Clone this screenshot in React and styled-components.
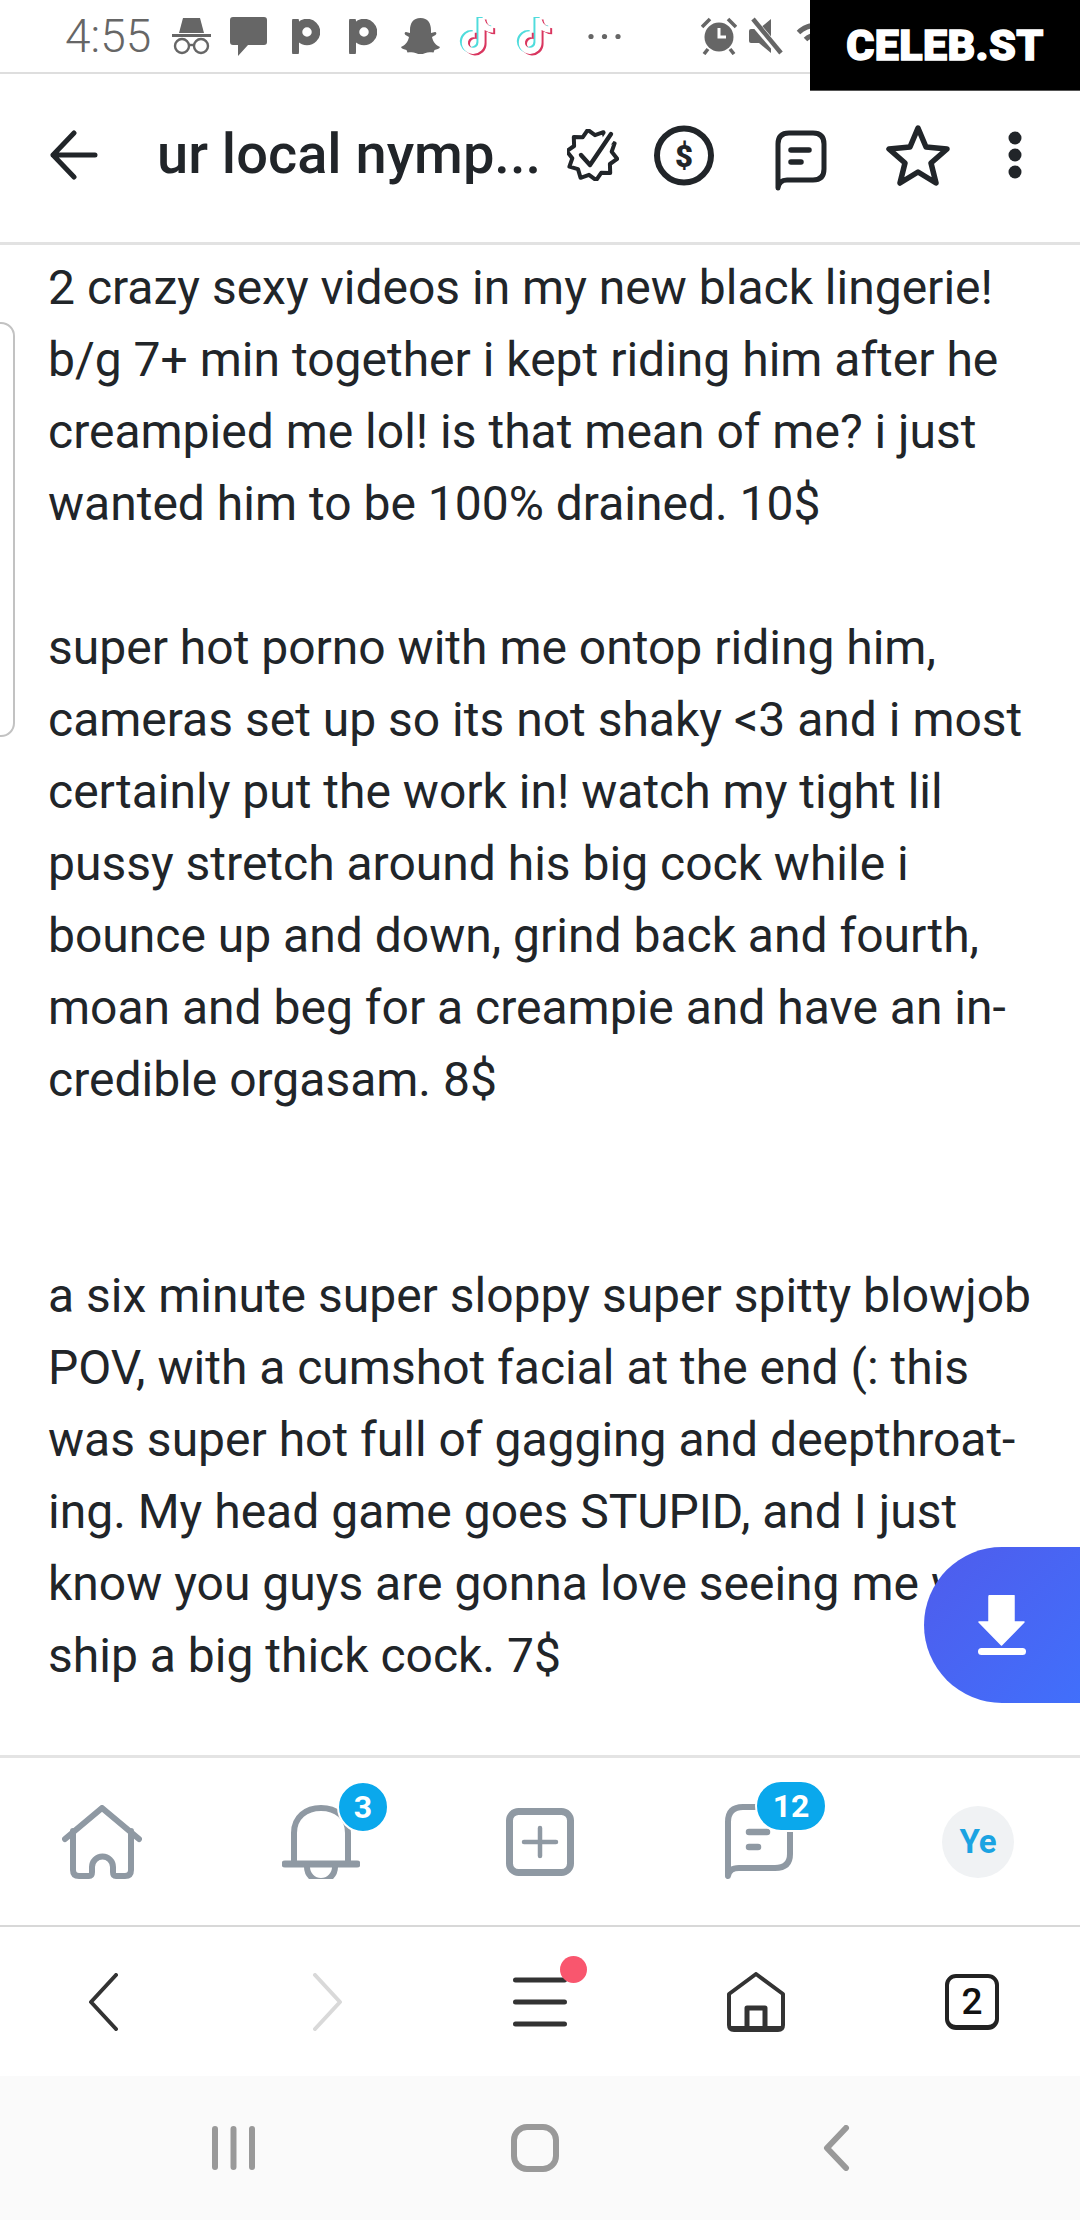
import React from "react";
import styled, { createGlobalStyle } from "styled-components";
import { MdWifi } from "react-icons/md";

const Global = createGlobalStyle`
  html, body { margin: 0; padding: 0; background: #fff; }
  * { box-sizing: border-box; }
`;

const Page = styled.div`
  position: relative;
  width: 1080px;
  height: 2220px;
  overflow: hidden;
  display: flex;
  flex-direction: column;
  background: #fff;
  font-family: Roboto, "Liberation Sans", sans-serif;
  color: #212529;
`;

const StatusBar = styled.div`
  flex: 0 0 74px;
  display: flex;
  align-items: center;
  padding-left: 65px;
  border-bottom: 2px solid #dedede;
  color: #666;
`;
const Time = styled.span`
  font-size: 46px;
  font-weight: 300;
  width: 85px;
  line-height: 1;
`;
const StatusIcon = styled.span`
  display: inline-flex;
  flex: none;
  margin-left: ${(p) => p.$ml}px;
`;
const Brand = styled.div`
  position: absolute;
  top: 0;
  right: 0;
  width: 270px;
  height: 91px;
  background: #000;
  border-bottom: 1px solid #555;
  color: #fff;
  font-family: Roboto, sans-serif;
  font-weight: 900;
  font-size: 43px;
  letter-spacing: 0.4px;
  -webkit-text-stroke: 1.4px #fff;
  display: flex;
  align-items: center;
  justify-content: center;
`;

const Header = styled.header`
  flex: 0 0 171px;
  display: flex;
  align-items: center;
  padding: 0 0 6px 50px;
  border-bottom: 3px solid #e2e2e2;
  color: #212529;
`;
const Title = styled.h1`
  margin: 0 0 0 59px;
  width: 390px;
  flex: none;
  font-size: 56px;
  font-weight: 500;
  line-height: 1.2;
  white-space: nowrap;
`;
const HeaderIcon = styled.span`
  display: inline-flex;
  flex: none;
  margin-left: ${(p) => p.$ml}px;
  margin-top: ${(p) => p.$mt || 0}px;
`;

const Content = styled.main`
  flex: 1;
  overflow: hidden;
  padding: 7px 0 0 48px;
  font-size: 48px;
  line-height: 72px;
  color: #212529;
`;
const Line = styled.div`
  height: 72px;
  white-space: nowrap;
`;
const SideCard = styled.div`
  position: absolute;
  left: -20px;
  top: 322px;
  width: 35px;
  height: 415px;
  border: 2px solid #c2c2c2;
  border-radius: 14px;
`;
const Fab = styled.button`
  position: absolute;
  top: 1547px;
  right: 0;
  width: 156px;
  height: 156px;
  padding: 0;
  border: 0;
  border-radius: 78px 0 0 78px;
  background: linear-gradient(135deg, #4f5cec, #416ffb);
  display: flex;
  align-items: center;
  justify-content: center;
`;

const AppNav = styled.nav`
  flex: 0 0 172px;
  display: grid;
  grid-template-columns: repeat(5, 219px);
  margin-left: -7.5px;
  width: 1095px;
  align-items: center;
  justify-items: center;
  border-top: 3px solid #e4e4e4;
  border-bottom: 2px solid #d8d8d8;
  color: #8f99a3;
`;
const NavItem = styled.div`
  position: relative;
  display: flex;
  align-items: center;
  justify-content: center;
`;
const CountBadge = styled.span`
  position: absolute;
  top: -24px;
  left: ${(p) => p.$left}px;
  min-width: ${(p) => p.$w}px;
  height: 52px;
  border: 2px solid #fff;
  border-radius: 26px;
  background: #0aa8ec;
  color: #fff;
  font-size: 32px;
  font-weight: 700;
  display: flex;
  align-items: center;
  justify-content: center;
`;
const Avatar = styled.div`
  width: 72px;
  height: 72px;
  border-radius: 50%;
  background: #f0f2f4;
  color: #1ba3e2;
  font-size: 33px;
  font-weight: 700;
  display: flex;
  align-items: center;
  justify-content: center;
`;

const BrowserBar = styled.div`
  flex: 0 0 149px;
  display: grid;
  grid-template-columns: repeat(5, 216px);
  align-items: center;
  justify-items: center;
  color: #333;
`;
const TabCount = styled.div`
  width: 54px;
  height: 56px;
  border: 4px solid #222;
  border-bottom-width: 5px;
  border-radius: 11px;
  color: #111;
  font-size: 37px;
  font-weight: 500;
  display: flex;
  align-items: center;
  justify-content: center;
`;
const MenuWrap = styled.div`
  position: relative;
  display: flex;
`;
const RedDot = styled.span`
  position: absolute;
  left: 47px;
  top: -21px;
  width: 27px;
  height: 27px;
  border-radius: 50%;
  background: #f9566e;
`;
const SystemBar = styled.div`
  flex: 0 0 144px;
  display: grid;
  grid-template-columns: repeat(3, 302px);
  justify-content: center;
  align-items: center;
  justify-items: center;
  padding-right: 10px;
  background: #fafafa;
  color: #999;
`;

const NOTE =
  "M448,209.91a210.06,210.06,0,0,1-122.77-39.25V349.38A162.55,162.55,0,1,1,185,188.31V278.2a74.62,74.62,0,1,0,52.23,71.18V0l88,0a121.18,121.18,0,0,0,1.86,22.17h0A122.18,122.18,0,0,0,381,102.39a121.43,121.43,0,0,0,67,20.14Z";

const burst = (() => {
  const pts = [];
  for (let i = 0; i < 20; i++) {
    const r = i % 2 ? 20 : 25.5;
    const a = (i / 20) * Math.PI * 2 + 0.15;
    pts.push(`${(25 + r * Math.cos(a)).toFixed(1)},${(26 + r * Math.sin(a)).toFixed(1)}`);
  }
  return pts.join(" ");
})();

const Incognito = () => (
  <svg width="39" height="37" viewBox="0 0 39 37" fill="currentColor">
    <path d="M11 0 H28 L32 15 H7 Z" />
    <rect x="0" y="16" width="39" height="3" />
    <g fill="none" stroke="currentColor" strokeWidth="2.4">
      <circle cx="10" cy="28" r="7" />
      <circle cx="29" cy="28" r="7" />
      <path d="M17 27 H22" />
    </g>
  </svg>
);
const Bubble = () => (
  <svg width="37" height="39" viewBox="0 0 37 39" fill="currentColor">
    <path d="M3 0 H34 Q37 0 37 3 V25 Q37 28 34 28 H18 L8 39 V28 H3 Q0 28 0 25 V3 Q0 0 3 0 Z" />
  </svg>
);
const PLogo = () => (
  <svg width="28" height="35" viewBox="0 0 28 35" fill="none" stroke="currentColor">
    <circle cx="15" cy="13" r="9" strokeWidth="8.5" />
    <path d="M3.5 2 V33" strokeWidth="7" strokeLinecap="round" />
  </svg>
);
const Ghost = () => (
  <svg width="39" height="36" viewBox="0 0 39 36" fill="currentColor">
    <path d="M19.5 0 C27 0 30 5.5 30 12 V15 L34 14 C35.5 14 36 16 34.5 17 L31 19 C32 24 35 27.5 39 29 C38.5 31 35.5 31.5 33.5 32 L32.5 34.5 C29 34 26.5 34 24.5 35 C22.5 36 21 36 19.5 36 C18 36 16.5 36 14.5 35 C12.5 34 10 34 6.5 34.5 L5.5 32 C3.5 31.5 0.5 31 0 29 C4 27.5 7 24 8 19 L4.5 17 C3 16 3.5 14 5 14 L9 15 V12 C9 5.5 12 0 19.5 0 Z" />
  </svg>
);
const TikTok = () => (
  <svg width="37" height="42" viewBox="-40 -30 528 572">
    <path d={NOTE} fill="#4fdcdc" transform="translate(-28,-16)" />
    <path d={NOTE} fill="#d9365f" transform="translate(28,22)" />
    <path d={NOTE} fill="#fff" />
  </svg>
);
const Alarm = () => (
  <svg width="36" height="38" viewBox="0 0 36 38" fill="currentColor">
    <circle cx="18" cy="20" r="14.5" />
    <path d="M18 11 V20 H25" fill="none" stroke="#fff" strokeWidth="3" />
    <path d="M1 10 L9 2 M35 10 L27 2 M7 32 L3 37 M29 32 L33 37" stroke="currentColor" strokeWidth="3.6" />
  </svg>
);
const Muted = () => (
  <svg width="37" height="38" viewBox="0 0 37 38" fill="currentColor">
    <path d="M4 12 H12 L24 2 V36 L12 26 H4 Q2 26 2 24 V14 Q2 12 4 12 Z" />
    <path d="M4 2 L33 36" stroke="#fff" strokeWidth="8" />
    <path d="M6 2 L34 36" stroke="currentColor" strokeWidth="4.5" />
  </svg>
);

const BackArrow = () => (
  <svg width="48" height="50" viewBox="0 0 48 50" fill="none" stroke="currentColor" strokeWidth="5" strokeLinecap="round" strokeLinejoin="round">
    <path d="M24 3 L3 25 L24 47 M3 25 H45" />
  </svg>
);
const Verified = () => (
  <svg width="52" height="52" viewBox="0 0 52 52" fill="none" stroke="currentColor" strokeWidth="4" strokeLinejoin="round">
    <polygon points={burst} />
    <path d="M13 26 L23 37 L46 3" stroke="#fff" strokeWidth="11" />
    <path d="M14 26 L23 36 L44 5" strokeWidth="4.4" strokeLinecap="round" />
  </svg>
);
const Dollar = () => (
  <svg width="60" height="61" viewBox="0 0 60 61" fill="none" stroke="currentColor">
    <circle cx="30" cy="30.5" r="27" strokeWidth="6" />
    <text x="30" y="41.5" textAnchor="middle" fontFamily="Roboto, sans-serif" fontWeight="900" fontSize="31" fill="currentColor" stroke="none">$</text>
  </svg>
);
const MessageOutline = () => (
  <svg width="52" height="62" viewBox="0 0 52 62" fill="none" stroke="currentColor" strokeWidth="5" strokeLinecap="round" strokeLinejoin="round">
    <path d="M3 58 V14 Q3 3 14 3 H38 Q49 3 49 14 V39 Q49 50 38 50 H12 Q4 50 3 58 Z" />
    <path d="M16 20 H34 M16 32 H26" strokeWidth="5.5" />
  </svg>
);
const Star = () => (
  <svg width="64" height="62" viewBox="0 0 64 62" fill="none" stroke="currentColor" strokeWidth="5.5" strokeLinejoin="round">
    <path d="M32 4 L40 23 L61 25 L45 39 L50 59 L32 48 L14 59 L19 39 L3 25 L24 23 Z" />
  </svg>
);
const Kebab = () => (
  <svg width="14" height="48" viewBox="0 0 14 48" fill="currentColor">
    <circle cx="7" cy="7" r="6.5" />
    <circle cx="7" cy="24" r="6.5" />
    <circle cx="7" cy="41" r="6.5" />
  </svg>
);

const HomeIcon = () => (
  <svg width="80" height="74" viewBox="0 0 80 74" fill="none" stroke="currentColor" strokeWidth="6" strokeLinecap="round" strokeLinejoin="round">
    <path d="M3 34 L40 3 L77 34" />
    <path d="M11 26 V65 Q11 71 17 71 H27 Q30 71 30 67 V62 A10.5 10.5 0 0 1 51 62 V67 Q51 71 54 71 H63 Q69 71 69 65 V26" />
  </svg>
);
const BellIcon = () => (
  <svg width="78" height="74" viewBox="0 0 78 74" fill="none" stroke="currentColor" strokeWidth="6" strokeLinecap="round">
    <path d="M12 58 V28 C12 12 24 3 39 3 C54 3 66 12 66 28 V58" />
    <path d="M3 59 H75" strokeWidth="7" />
    <path d="M25 62 A14 14 0 0 0 53 62" />
  </svg>
);
const PlusBox = () => (
  <svg width="68" height="68" viewBox="0 0 68 68" fill="none" stroke="currentColor" strokeLinecap="round">
    <rect x="3.5" y="3.5" width="61" height="61" rx="9" strokeWidth="7" />
    <path d="M34 20 V48 M18 34 H50" strokeWidth="4.5" />
  </svg>
);
const MessageNav = () => (
  <svg width="68" height="76" viewBox="0 0 68 76" fill="none" stroke="currentColor" strokeWidth="6" strokeLinecap="round" strokeLinejoin="round">
    <path d="M3 72 V18 Q3 3 18 3 H50 Q65 3 65 18 V50 Q65 64 50 64 H14 Q4 64 3 72 Z" />
    <path d="M24 28 H42 M24 43 H33" strokeWidth="6.5" />
  </svg>
);

const ChevLeft = () => (
  <svg width="60" height="58" viewBox="0 0 60 58" fill="none" stroke="currentColor" strokeWidth="4" strokeLinecap="round" strokeLinejoin="round">
    <path d="M38 2 L13 29 L38 56" />
  </svg>
);
const ChevRight = () => (
  <svg width="60" height="58" viewBox="0 0 60 58" fill="none" stroke="#d9d9d9" strokeWidth="4" strokeLinecap="round" strokeLinejoin="round">
    <path d="M21 2 L46 29 L21 56" />
  </svg>
);
const GestureBack = () => (
  <svg width="48" height="46" viewBox="0 0 48 46" fill="none" stroke="currentColor" strokeWidth="6" strokeLinecap="round" strokeLinejoin="round">
    <path d="M33 3 L14 23 L33 43" />
  </svg>
);
const MenuIcon = () => (
  <svg width="54" height="50" viewBox="0 0 54 50" fill="none" stroke="currentColor" strokeWidth="5" strokeLinecap="round">
    <path d="M2.5 3 H51.5 M2.5 25 H51.5 M2.5 47 H51.5" />
  </svg>
);
const BrowserHome = () => (
  <svg width="58" height="60" viewBox="0 0 58 60" fill="none" stroke="currentColor" strokeWidth="4" strokeLinejoin="round">
    <path d="M2 22 L29 2 L56 22 V53 Q56 58 51 58 H7 Q2 58 2 53 Z" />
    <path d="M20 58 V36 H38 V58" strokeWidth="5" />
    <path d="M4 56 H54" strokeWidth="4" />
  </svg>
);
const DownloadIcon = () => (
  <svg width="48" height="60" viewBox="0 0 48 60" fill="#fff">
    <path d="M13 0 H35 Q36 0 36 1 V27 H46 L23.5 50 L1 27 H11 V2 Q11 0 13 0 Z" stroke="#fff" strokeWidth="1.5" strokeLinejoin="round" />
    <rect x="0" y="53" width="48" height="7" rx="3.5" />
  </svg>
);
const GestureBars = () => (
  <svg width="43" height="44" viewBox="0 0 43 44" fill="none" stroke="currentColor" strokeWidth="6" strokeLinecap="round">
    <path d="M3 3 V41 M21.5 3 V41 M40 3 V41" />
  </svg>
);
const GestureSquare = () => (
  <svg width="48" height="48" viewBox="0 0 48 48" fill="none" stroke="currentColor" strokeWidth="6">
    <rect x="3" y="3" width="42" height="42" rx="13" />
  </svg>
);

const TEXT = [
  "2 crazy sexy videos in my new black lingerie!",
  "b/g 7+ min together i kept riding him after he",
  "creampied me lol! is that mean of me? i just",
  "wanted him to be 100% drained. 10$",
  "",
  "super hot porno with me ontop riding him,",
  "cameras set up so its not shaky <3 and i most",
  "certainly put the work in! watch my tight lil",
  "pussy stretch around his big cock while i",
  "bounce up and down, grind back and fourth,",
  "moan and beg for a creampie and have an in-",
  "credible orgasam. 8$",
  "",
  "",
  "a six minute super sloppy super spitty blowjob",
  "POV, with a cumshot facial at the end (: this",
  "was super hot full of gagging and deepthroat-",
  "ing. My head game goes STUPID, and I just",
  "know you guys are gonna love seeing me wor-",
  "ship a big thick cock. 7$",
];

export default function App() {
  return (
    <Page>
      <Global />
      <StatusBar>
        <Time>4:55</Time>
        <StatusIcon $ml={22}><Incognito /></StatusIcon>
        <StatusIcon $ml={19}><Bubble /></StatusIcon>
        <StatusIcon $ml={25}><PLogo /></StatusIcon>
        <StatusIcon $ml={29}><PLogo /></StatusIcon>
        <StatusIcon $ml={24}><Ghost /></StatusIcon>
        <StatusIcon $ml={19}><TikTok /></StatusIcon>
        <StatusIcon $ml={20}><TikTok /></StatusIcon>
        <StatusIcon $ml={35}>
          <svg width="33" height="7" viewBox="0 0 33 7" fill="currentColor">
            <circle cx="3" cy="3.5" r="2.6" />
            <circle cx="16.5" cy="3.5" r="2.6" />
            <circle cx="30" cy="3.5" r="2.6" />
          </svg>
        </StatusIcon>
        <StatusIcon $ml={80}><Alarm /></StatusIcon>
        <StatusIcon $ml={10}><Muted /></StatusIcon>
        <StatusIcon $ml={11}><MdWifi size={42} /></StatusIcon>
      </StatusBar>
      <Brand>CELEB.ST</Brand>
      <Header>
        <BackArrow />
        <Title>ur local nymp...</Title>
        <HeaderIcon $ml={20}><Verified /></HeaderIcon>
        <HeaderIcon $ml={35}><Dollar /></HeaderIcon>
        <HeaderIcon $ml={61} $mt={12}><MessageOutline /></HeaderIcon>
        <HeaderIcon $ml={59}><Star /></HeaderIcon>
        <HeaderIcon $ml={58}><Kebab /></HeaderIcon>
      </Header>
      <Content>
        {TEXT.map((l, i) => (
          <Line key={i}>{l}</Line>
        ))}
      </Content>
      <SideCard />
      <Fab aria-label="Download"><DownloadIcon /></Fab>
      <AppNav>
        <NavItem><HomeIcon /></NavItem>
        <NavItem>
          <BellIcon />
          <CountBadge $left={55} $w={52}>3</CountBadge>
        </NavItem>
        <NavItem><PlusBox /></NavItem>
        <NavItem>
          <MessageNav />
          <CountBadge $left={30} $w={72}>12</CountBadge>
        </NavItem>
        <NavItem><Avatar>Ye</Avatar></NavItem>
      </AppNav>
      <BrowserBar>
        <ChevLeft />
        <ChevRight />
        <MenuWrap>
          <MenuIcon />
          <RedDot />
        </MenuWrap>
        <BrowserHome />
        <TabCount>2</TabCount>
      </BrowserBar>
      <SystemBar>
        <GestureBars />
        <GestureSquare />
        <GestureBack />
      </SystemBar>
    </Page>
  );
}
